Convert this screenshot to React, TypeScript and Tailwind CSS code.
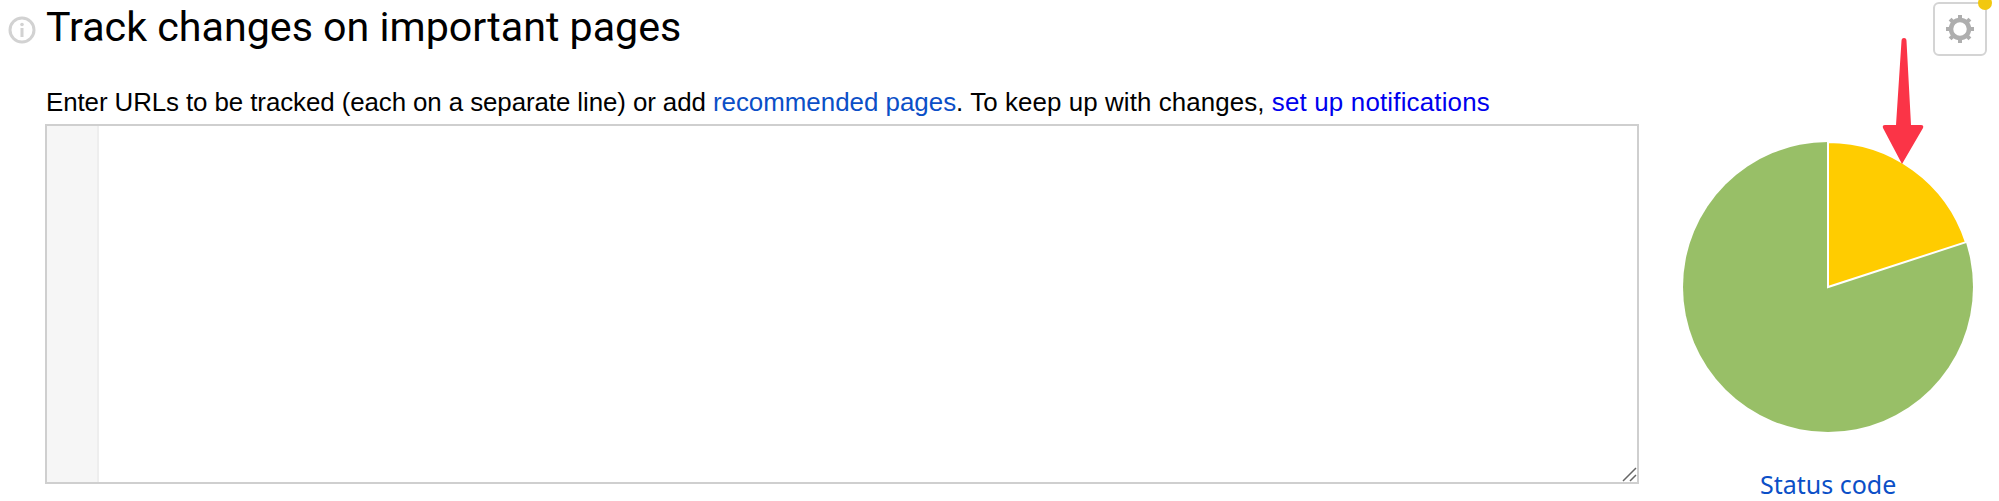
export default function App() {
  return (
    <div className="relative flex w-[1999px] h-[501px] overflow-hidden bg-white text-black font-['Liberation_Sans',sans-serif]">
      <div className="w-[1640px] shrink-0 flex flex-col">
        <div className="flex items-center h-[50px] mt-[2px]">
          <svg className="ml-[8px] w-[28px] h-[28px] mt-[5px]" viewBox="0 0 28 28" fill="none">
            <circle cx="14" cy="14" r="12" stroke="#d2d2d2" strokeWidth="3" />
            <circle cx="14" cy="8.5" r="1.8" fill="#d2d2d2" />
            <rect x="12.5" y="12" width="3" height="9" fill="#d2d2d2" />
          </svg>
          <h1 className="ml-[10px] text-[41.2px] leading-[50px] font-normal font-['Roboto',sans-serif] whitespace-nowrap">Track changes on important pages</h1>
        </div>
        <p className="ml-[46px] mt-[34px] text-[25.9px] leading-[32px] whitespace-nowrap">
          <span className="tracking-[-0.09px]">Enter URLs to be tracked (each on a separate line) or add </span><a className="text-[#0b4fc7]">recommended pages</a><span className="tracking-[0.09px]">. To keep up with changes, </span><a className="text-[#0000ee] tracking-[0.18px]">set up notifications</a>
        </p>
        <div className="relative ml-[45px] mt-[6px] w-[1594px] h-[360px] border-2 border-[#cfcfcf] flex">
          <div className="w-[52px] h-full bg-[#f6f6f6] border-r-2 border-[#eeeeee]" />
          <svg className="absolute right-0 bottom-0 w-[15px] h-[15px]" viewBox="0 0 15 15" fill="none">
            <path d="M1 14 L14 1 M8 14 L14 8" stroke="#666" strokeWidth="1.5" />
          </svg>
        </div>
      </div>
      <div className="flex-1 flex flex-col items-start">
        <div className="relative ml-[293px] mt-[2px] w-[54px] h-[54px] rounded-[6px] border-2 border-[#d4d4d4] flex items-center justify-center">
          <svg className="w-[30px] h-[30px]" viewBox="0 0 30 30" fill="none">
            <circle cx="15" cy="15" r="9" stroke="#aeaeae" strokeWidth="4.5" />
            <g stroke="#aeaeae" strokeWidth="4">
              <path d="M15 1V6" />
              <path d="M15 24V29" />
              <path d="M1 15H6" />
              <path d="M24 15H29" />
              <path d="M5.1 5.1L8.6 8.6" />
              <path d="M21.4 21.4L24.9 24.9" />
              <path d="M5.1 24.9L8.6 21.4" />
              <path d="M21.4 8.6L24.9 5.1" />
            </g>
          </svg>
          <span className="absolute right-[-7px] top-[-8px] w-[14px] h-[14px] rounded-full bg-[#f2c80f]" />
        </div>
        <svg className="ml-[42px] mt-[85px] w-[292px] h-[292px]" viewBox="0 0 292 292">
          <circle cx="146" cy="146" r="145" fill="#98bf67" />
          <path d="M146 146 L146 1 A145 145 0 0 1 283.9 101.2 Z" fill="#ffcc00" stroke="#ffffff" strokeWidth="2" />
        </svg>
        <a className="ml-[120px] mt-[36px] text-[25px] leading-[30px] text-[#0b4fc7] font-['Noto_Sans',sans-serif] whitespace-nowrap">Status code</a>
      </div>
      <svg className="absolute left-[1880px] top-[36px] w-[48px] h-[132px]" viewBox="0 0 48 132" fill="none">
        <path d="M24 2 Q26.5 2 26.5 5 L31 89 H41 Q44 89 43 92 L22 128 L3 92 Q2 89 5 89 H16 L21.5 5 Q21.5 2 24 2 Z" fill="#fb3447" />
      </svg>
    </div>
  );
}
